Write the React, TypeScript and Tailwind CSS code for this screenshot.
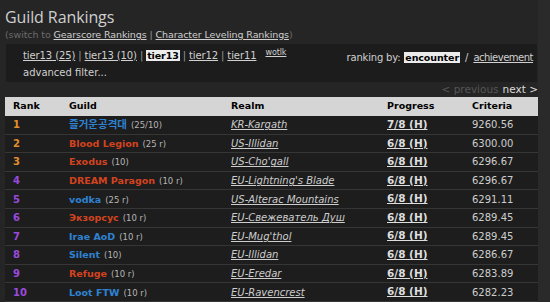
import React from 'react';

type Row = {
  rank: number;
  guild: string;
  size: string;
  faction: 'a' | 'h';
  realm: string;
  progress: string;
  criteria: string;
};

const rows: Row[] = [
  { rank: 1, guild: '즐거운공격대', size: '(25/10)', faction: 'a', realm: 'KR-Kargath', progress: '7/8 (H)', criteria: '9260.56' },
  { rank: 2, guild: 'Blood Legion', size: '(25 r)', faction: 'h', realm: 'US-Illidan', progress: '6/8 (H)', criteria: '6300.00' },
  { rank: 3, guild: 'Exodus', size: '(10)', faction: 'h', realm: "US-Cho'gall", progress: '6/8 (H)', criteria: '6296.67' },
  { rank: 4, guild: 'DREAM Paragon', size: '(10 r)', faction: 'h', realm: "EU-Lightning's Blade", progress: '6/8 (H)', criteria: '6296.67' },
  { rank: 5, guild: 'vodka', size: '(25 r)', faction: 'a', realm: 'US-Alterac Mountains', progress: '6/8 (H)', criteria: '6291.11' },
  { rank: 6, guild: 'Экзорсус', size: '(10 r)', faction: 'h', realm: 'EU-Свежеватель Душ', progress: '6/8 (H)', criteria: '6289.45' },
  { rank: 7, guild: 'Irae AoD', size: '(10 r)', faction: 'a', realm: "EU-Mug'thol", progress: '6/8 (H)', criteria: '6289.45' },
  { rank: 8, guild: 'Silent', size: '(10)', faction: 'a', realm: 'EU-Illidan', progress: '6/8 (H)', criteria: '6286.67' },
  { rank: 9, guild: 'Refuge', size: '(10 r)', faction: 'h', realm: 'EU-Eredar', progress: '6/8 (H)', criteria: '6283.89' },
  { rank: 10, guild: 'Loot FTW', size: '(10 r)', faction: 'a', realm: 'EU-Ravencrest', progress: '6/8 (H)', criteria: '6282.23' },
];

const cols = 'grid grid-cols-[56px_162px_156px_85px_1fr] items-center pl-2';

const Sep = () => <span className="text-[#9a9a9a] px-[3px]">|</span>;

const App: React.FC = () => {
  return (
    <div className="w-[550px] h-[302px] overflow-hidden bg-[#2a2a2a] flex font-['DejaVu_Sans',sans-serif]">
      <div className="w-[538px] bg-[#252525] flex flex-col">
        {/* title */}
        <div className="pl-[5px] pt-[6px] h-[28px] text-[16px] leading-[22px] text-[#cfcfcf] font-['Open_Sans',sans-serif] tracking-[-0.1px]">
          Guild Rankings
        </div>
        <div className="pl-[5px] h-[16px] text-[9.5px] leading-[14px] text-[#6a6a6a] tracking-[-0.1px]">
          (switch to <a className="text-[#cfcfcf] underline">Gearscore Rankings</a>
          <span className="text-[#9a9a9a]"> | </span>
          <a className="text-[#cfcfcf] underline">Character Leveling Rankings</a>)
        </div>

        {/* filter box */}
        <div className="ml-[6px] w-[531px] h-[38px] bg-[#1c1c1c] pl-[17px] pr-[4px] flex flex-col text-[10px] text-[#d0d0d0]">
          <div className="flex items-center justify-between h-[22px]">
            <div className="flex items-center tracking-[-0.1px]">
              <a className="underline">tier13 (25)</a>
              <Sep />
              <a className="underline">tier13 (10)</a>
              <Sep />
              <span className="bg-[#ececec] text-black font-bold px-[1px] leading-[11px] text-[9.5px]">tier13</span>
              <Sep />
              <a className="underline">tier12</a>
              <Sep />
              <a className="underline">tier11</a>
              <a className="underline text-[8px] ml-[9px] -mt-[4px]">wotlk</a>
            </div>
            <div className="flex items-center mt-[5px]">
              <span className="mr-[4px] tracking-[-0.2px]">ranking by:</span>
              <span className="bg-[#ececec] text-black font-bold px-[1px] leading-[11px] text-[9.5px] tracking-[-0.1px]">encounter</span>
              <span className="px-[5px]">/</span>
              <a className="underline tracking-[-0.5px]">achievement</a>
            </div>
          </div>
          <div className="h-[14px] leading-[14px]">advanced filter...</div>
        </div>

        {/* pager */}
        <div className="h-[14px] flex justify-end items-center text-[10.5px] pt-[1px]">
          <span className="text-[#555]">&lt; previous</span>
          <span className="text-[#dcdcdc] ml-[4px]">next &gt;</span>
        </div>

        {/* table */}
        <div className="ml-[5px] w-[533px] mt-[1px]">
          <div className={`${cols} h-[19px] bg-[#d5d5d5] text-black font-bold text-[9.5px]`}>
            <span>Rank</span>
            <span>Guild</span>
            <span>Realm</span>
            <span>Progress</span>
            <span>Criteria</span>
          </div>
          {rows.map(r => (
            <div
              key={r.rank}
              className={`${cols} h-[18.6px] bg-[#1d1d1d] border-b border-[#363636] text-[10px]`}
            >
              <span className={`font-bold text-[10px] ${r.rank <= 3 ? 'text-[#e58d2e]' : 'text-[#9b4ade]'}`}>{r.rank}</span>
              <span className="whitespace-nowrap">
                <span
                  className={`font-bold ${r.rank === 1 ? 'text-[10.5px]' : 'text-[9.5px]'} ${
                    r.faction === 'a' ? 'text-[#2f82d2]' : 'text-[#d3431f]'
                  } font-['DejaVu_Sans','Noto_Sans_CJK_KR',sans-serif]`}
                >
                  {r.guild}
                </span>
                <span className="text-[#b5b5b5] text-[8.5px] ml-[4px]">{r.size}</span>
              </span>
              <span className="italic underline text-[#cdcdcd] whitespace-nowrap">{r.realm}</span>
              <span className="font-bold underline text-[#dedede] text-[10.5px]">{r.progress}</span>
              <span className="text-[#cdcdcd]">{r.criteria}</span>
            </div>
          ))}
        </div>
      </div>
    </div>
  );
};

export default App;
